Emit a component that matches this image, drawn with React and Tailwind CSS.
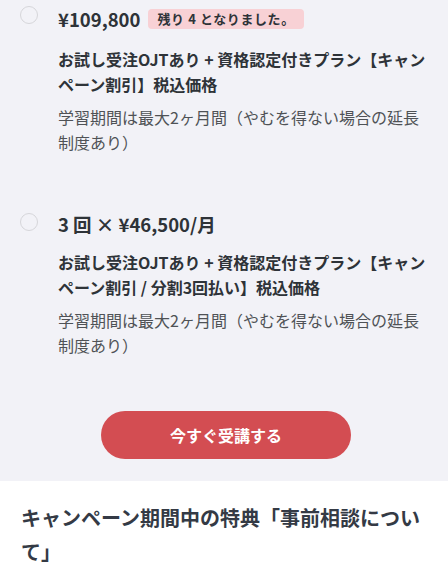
const plans = [
  {
    price: "¥109,800",
    badge: "残り 4 となりました。",
    title: "お試し受注OJTあり + 資格認定付きプラン【キャンペーン割引】税込価格",
    note: "学習期間は最大2ヶ月間（やむを得ない場合の延長制度あり）",
  },
  {
    price: "3 回 × ¥46,500/月",
    title: "お試し受注OJTあり + 資格認定付きプラン【キャンペーン割引 / 分割3回払い】税込価格",
    note: "学習期間は最大2ヶ月間（やむを得ない場合の延長制度あり）",
  },
]

const PlanOption = ({ plan, first }) => (
  <label className={`flex gap-5 ${first ? "" : "mt-[57px]"}`}>
    <span className="mt-[1px] w-[18px] h-[18px] shrink-0 rounded-full border border-[#d6d6da] bg-[#f2f2f7]"></span>
    <div className="flex flex-col min-w-0">
      <div className="flex items-center">
        <span className="text-[18.5px] leading-[24px] font-bold text-[#2e3338]">{plan.price}</span>
        {plan.badge && (
          <span className="ml-[8px] my-1 h-[20px] px-[9px] flex items-center rounded bg-[#f8d1d5] text-[13px] tracking-[0.6px] font-bold text-[#2e3338]">
            {plan.badge}
          </span>
        )}
      </div>
      <p className="mt-[14px] text-[16px] leading-[25px] font-bold text-[#2e3338]">{plan.title}</p>
      <p className="mt-2 text-[16px] leading-[25px] text-[#4f5256]">{plan.note}</p>
    </div>
  </label>
)

export default function App() {
  return (
    <div
      className="w-[448px] min-h-[583px] bg-white"
      style={{ fontFamily: '"Noto Sans CJK JP", "Noto Sans", sans-serif' }}
    >
      {/* Plans */}
      <div className="bg-[#f2f2f7] pt-[5px] pb-[22px] pl-5 pr-4">
        {plans.map((plan, i) => (
          <PlanOption key={i} plan={plan} first={i === 0} />
        ))}
        <div className="mt-[53px] flex justify-center">
          <button className="w-[250px] h-[48px] rounded-full bg-[#d34d52] text-white text-[16px] font-bold">
            今すぐ受講する
          </button>
        </div>
      </div>

      {/* Campaign */}
      <div className="pt-5 px-[21px]">
        <h2 className="text-[20px] leading-[34px] font-bold text-[#343a45]">
          キャンペーン期間中の特典「事前相談について」
        </h2>
      </div>
    </div>
  )
}
